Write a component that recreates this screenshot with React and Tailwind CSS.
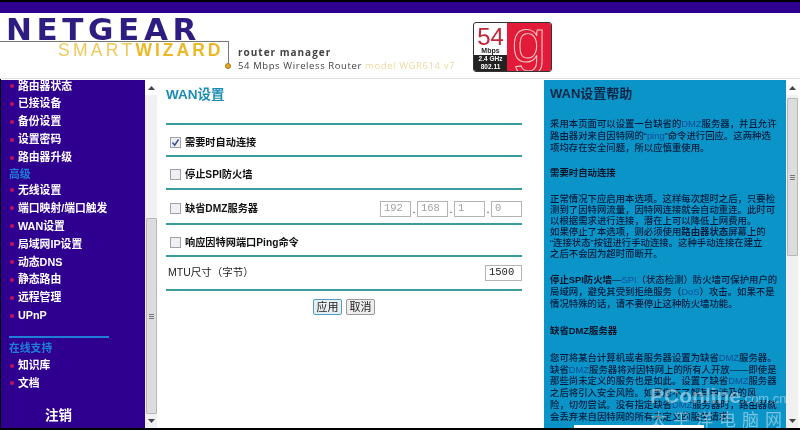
import React from 'react';

const font = 'font-["Liberation_Sans","Noto_Sans_CJK_SC",sans-serif]';

const menuTop = ['路由器状态', '已接设备', '备份设置', '设置密码', '路由器升级'];
const menuAdvanced = ['无线设置', '端口映射/端口触发', 'WAN设置', '局域网IP设置', '动态DNS', '静态路由', '远程管理', 'UPnP'];
const menuSupport = ['知识库', '文档'];

const MenuItem = ({ label }) => (
  <div className="flex h-[17.9px] items-center gap-[4px] pl-[9px] text-[10.8px] font-bold leading-none text-white whitespace-nowrap">
    <span className="size-[4px] rounded-full bg-[#c4105c]"></span>
    {label}
  </div>
);

const Scrollbar = ({ thumbTop, thumbHeight }) => (
  <div className="flex w-[12px] shrink-0 flex-col items-center bg-[#f0f0f0]">
    <div className="flex h-[15px] w-full items-center justify-center bg-white">
      <svg width="7" height="4" viewBox="0 0 7 4"><path d="M0 4 3.5 0 7 4z" fill="#444" /></svg>
    </div>
    <div className={`${thumbTop} ${thumbHeight} flex w-[11px] flex-col items-center justify-center gap-[1px] rounded-[1px] border border-[#b8b8b8] bg-[#dcdcdc]`}>
      <span className="h-px w-[5px] bg-[#777]"></span>
      <span className="h-px w-[5px] bg-[#777]"></span>
      <span className="h-px w-[5px] bg-[#777]"></span>
    </div>
    <div className="mt-auto flex h-[14px] w-full items-center justify-center">
      <svg width="7" height="4" viewBox="0 0 7 4"><path d="M0 0 3.5 4 7 0z" fill="#444" /></svg>
    </div>
  </div>
);

const Rule = () => <div className="h-[2px] w-full bg-[#3a9c9f]"></div>;

const CheckRow = ({ label, checked, height, children }) => (
  <div className={`${height} flex items-center justify-between pl-[4px] pt-[5px]`}>
    <div className="flex items-center gap-[4px]">
      <span className="flex size-[11px] items-center justify-center border border-[#a0a0a8] bg-[#eef0f4]">
        {checked && (
          <svg width="9" height="9" viewBox="0 0 9 9"><path d="M1.5 4.5 3.7 7.2 7.5 1.5" fill="none" stroke="#3d4f8f" strokeWidth="1.5" /></svg>
        )}
      </span>
      <span className="text-[10.2px] font-bold text-[#111]">{label}</span>
    </div>
    {children}
  </div>
);

const IpBox = ({ value }) => (
  <span className="flex h-[16px] w-[31px] items-center border border-[#b4b4b4] pl-[3px] font-['Liberation_Mono',monospace] text-[10.5px] text-[#a0a0a0]">{value}</span>
);

const IpDot = () => <span className="w-[3px]">.</span>;

const Lnk = ({ children }) => <span className="font-normal text-[#0f4f96]">{children}</span>;

export default function App() {
  return (
    <div className={`${font} relative flex h-[430px] w-[800px] flex-col overflow-hidden bg-white blur-[0.35px]`}>
      {/* top band */}
      <div className="h-[13px] shrink-0 border-t-2 border-black bg-[#2f0090]"></div>

      {/* header */}
      <div className="relative flex h-[66px] shrink-0 border-b border-[#e2e2e2]">
        <div className="w-[238px] shrink-0 pl-[6px]">
          <div className="mt-[1px] text-[31px] font-bold leading-[30px] tracking-[4.6px] text-[#2e1c80] font-['DejaVu_Sans',sans-serif]">NETGEAR</div>
          <div className="-mt-[4px] pl-[52px] text-[17.5px] leading-[20px] tracking-[3.3px] text-[#eec95a] font-['Liberation_Sans',sans-serif] whitespace-nowrap">
            SMART<span className="font-bold tracking-[3px] text-[#edb825]">WIZARD</span>
          </div>
        </div>
        <div className="absolute left-0 top-[28px] h-[24px] w-[229px] border-r border-t border-[#777]"></div>
        <div className="absolute left-[225px] top-[50px] size-[6px] rounded-full border border-[#a87a10] bg-[#e8a825]"></div>
        <div className="mt-[33px] w-[235px] shrink-0 whitespace-nowrap font-['Open_Sans',sans-serif]">
          <div className="text-[10px] font-bold leading-[13px] tracking-[1px] text-[#444]">router manager</div>
          <div className="text-[9.5px] leading-[13px] tracking-[0.6px] text-[#444]">
            54 Mbps Wireless Router <span className="text-[#ecd9a0]">model WGR614 v7</span>
          </div>
        </div>
        {/* 54g badge */}
        <div className="mt-[9px] flex h-[50px] w-[79px] overflow-hidden rounded-[3px] border border-[#333]">
          <div className="flex w-[33px] flex-col items-center">
            <div className="mt-[3px] text-[24px] leading-[21px] text-[#c0283a]">54</div>
            <div className="text-[7px] font-bold leading-[8px] text-[#222]">Mbps</div>
            <div className="mt-auto flex h-[17px] w-full flex-col items-center justify-center bg-[#222] text-[6.5px] font-bold leading-[8px] text-white">
              <span>2.4 GHz</span>
              <span>802.11</span>
            </div>
          </div>
          <div className="flex flex-1 items-center justify-center overflow-hidden bg-[#e11b38] pb-[12px] font-['Liberation_Sans',sans-serif] text-[62px] leading-none text-transparent [-webkit-text-stroke:1px_#f6c8c8]">g</div>
        </div>
      </div>

      {/* body */}
      <div className="flex min-h-0 flex-1 border-b-2 border-l border-black bg-white pt-[1px]">
        {/* side menu */}
        <div className="flex w-[144px] shrink-0 flex-col overflow-hidden bg-[#2f0090]">
          <div className="-mt-[3px]">
            {menuTop.map((m) => <MenuItem key={m} label={m} />)}
          </div>
          <div className="flex h-[15px] items-center pl-[8px] text-[10.8px] font-bold text-[#1f7fd8]">高级</div>
          {menuAdvanced.map((m) => <MenuItem key={m} label={m} />)}
          <div className="ml-[8px] mt-[11px] h-[2px] w-[100px] bg-[#1f7fd8]"></div>
          <div className="mt-[3px] flex h-[16px] items-center pl-[8px] text-[10.8px] font-bold text-[#1f7fd8]">在线支持</div>
          {menuSupport.map((m) => <MenuItem key={m} label={m} />)}
          <div className="mt-[15px] pl-[44px] text-[13.5px] font-bold leading-[18px] text-white">注销</div>
        </div>

        <Scrollbar thumbTop="mt-[123px]" thumbHeight="h-[196px]" />

        {/* main form */}
        <div className="w-[384px] shrink-0 pl-[9px] pt-[5px]">
          <div className="h-[38px] text-[13.5px] font-bold leading-[20px] text-[#1b8cb4]">WAN设置</div>
          <div className="w-[356px]">
            <Rule />
            <CheckRow label="需要时自动连接" checked height="h-[30px]" />
            <Rule />
            <CheckRow label="停止SPI防火墙" height="h-[31px]" />
            <Rule />
            <CheckRow label="缺省DMZ服务器" height="h-[33px]">
              <div className="flex items-center gap-[1.5px] text-[11px] text-[#333]">
                <IpBox value="192" /><IpDot />
                <IpBox value="168" /><IpDot />
                <IpBox value="1" /><IpDot />
                <IpBox value="0" />
              </div>
            </CheckRow>
            <Rule />
            <CheckRow label="响应因特网端口Ping命令" height="h-[30px]" />
            <Rule />
            <div className="flex h-[32px] items-center justify-between pl-[2px]">
              <span className="text-[10.5px] text-[#222]">MTU尺寸（字节）</span>
              <span className="flex h-[16px] w-[37px] items-center border border-[#b4b4b4] pl-[3px] font-['Liberation_Mono',monospace] text-[10.5px] text-[#222]">1500</span>
            </div>
            <Rule />
            <div className="mt-[8px] flex justify-center gap-[4px] text-[11px] text-[#222]">
              <span className="flex h-[16px] w-[29px] items-center justify-center rounded-[2px] border border-[#4d9fc4] bg-[#e8eef2]">应用</span>
              <span className="flex h-[16px] w-[29px] items-center justify-center rounded-[2px] border border-[#999] bg-[#eeeeee]">取消</span>
            </div>
          </div>
        </div>

        {/* help panel */}
        <div className="ml-[3px] w-[242px] shrink-0 overflow-hidden bg-[#0a94c8] pl-[6px] pt-[5px] text-[9.4px] font-medium leading-[11.8px] text-[#001a3a] whitespace-nowrap">
          <div className="h-[33px] text-[13px] font-bold leading-[17px] text-[#0c2748]">WAN设置帮助</div>
          <div>采用本页面可以设置一台缺省的<Lnk>DMZ</Lnk>服务器，并且允许<br />路由器对来自因特网的“<Lnk>ping</Lnk>”命令进行回应。这两种选<br />项均存在安全问题，所以应慎重使用。</div>
          <div className="mt-[13px] font-bold leading-[14px] text-[#04152a]">需要时自动连接</div>
          <div className="mt-[13px] leading-[11px]">正常情况下应启用本选项。这样每次超时之后，只要检<br />测到了因特网流量，因特网连接就会自动重连。此时可<br />以根据需求进行连接，潜在上可以降低上网费用。<br />如果停止了本选项，则必须使用<b>路由器状态</b>屏幕上的<br />“连接状态”按钮进行手动连接。这种手动连接在建立<br />之后不会因为超时而断开。</div>
          <div className="mt-[15px]"><b className="text-[#04152a]">停止SPI防火墙</b>—<Lnk>SPI</Lnk>（状态检测）防火墙可保护用户的<br />局域网，避免其受到拒绝服务（<Lnk>DoS</Lnk>）攻击。如果不是<br />情况特殊的话，请不要停止这种防火墙功能。</div>
          <div className="mt-[14px] font-bold leading-[14px] text-[#04152a]">缺省DMZ服务器</div>
          <div className="mt-[14px]">您可将某台计算机或者服务器设置为缺省<Lnk>DMZ</Lnk>服务器。<br />缺省<Lnk>DMZ</Lnk>服务器将对因特网上的所有人开放——即使是<br />那些尚未定义的服务也是如此。设置了缺省<Lnk>DMZ</Lnk>服务器<br />之后将引入安全风险。如果您不了解其中涉及的风<br />险，切勿尝试。没有指定缺省<Lnk>DMZ</Lnk>服务器时，路由器就<br />会丢弃来自因特网的所有未定义的服务请求。</div>
          <div className="ml-[24px] mt-[2px] h-[4px] w-[130px] bg-white"></div>
        </div>

        <Scrollbar thumbTop="mt-[3px]" thumbHeight="h-[158px]" />
      </div>

      {/* watermark */}
      <div className="absolute left-[650px] top-[385px] whitespace-nowrap font-['Liberation_Sans',sans-serif] text-white/45">
        <div className="text-[21px] font-bold leading-[22px]">PConline<span className="text-[13px] font-normal">.com.cn</span></div>
        <div className="text-[17px] leading-[18px] tracking-[6px] font-['Noto_Sans_CJK_SC',sans-serif]">太平洋电脑网</div>
      </div>
    </div>
  );
}
